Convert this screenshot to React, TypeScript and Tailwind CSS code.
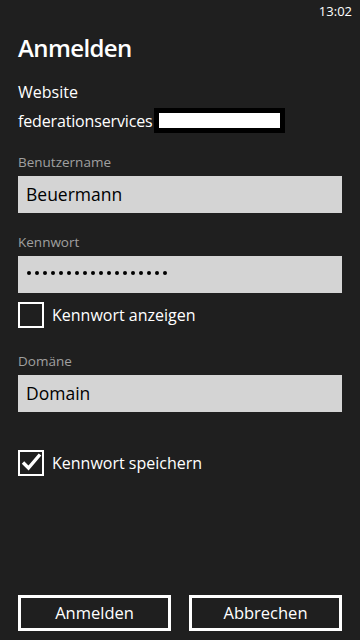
function Field({ label, children, mtLabel }: { label: string; children: React.ReactNode; mtLabel: string }) {
  return (
    <div className={mtLabel}>
      <div className="text-[13.5px] leading-[18px] text-[#a0a0a0]">{label}</div>
      <div className="mt-[5px] h-[37px] bg-[#d4d4d4] flex items-center px-[8px] text-[17.5px] text-black">
        {children}
      </div>
    </div>
  );
}

function Check({ checked, label }: { checked: boolean; label: string }) {
  return (
    <div className="flex items-center gap-[8px]">
      <div className="relative w-[26px] h-[26px] border-2 border-white">
        {checked && (
          <svg className="absolute -left-[2px] -top-[2px]" width="26" height="26" viewBox="0 0 26 26">
            <polyline points="5,12.5 10.5,18 22,4.5" fill="none" stroke="white" strokeWidth="3.4" />
          </svg>
        )}
      </div>
      <span className="text-[16px]">{label}</span>
    </div>
  );
}

export default function App() {
  const dots = Array.from({ length: 18 });
  return (
    <div
      className="w-[360px] h-[640px] bg-[#1f1f1f] text-white flex flex-col"
      style={{ fontFamily: '"Open Sans", "Noto Sans", sans-serif' }}
    >
      <div className="h-[24px] flex justify-end items-center pr-[8px] text-[13px]">13:02</div>

      <div className="px-[18px] flex flex-col flex-1">
        <h1 className="mt-[8px] text-[24px] leading-[32px] font-semibold tracking-[-0.6px]">Anmelden</h1>

        <div className="mt-[18px] text-[16px] leading-[20px]">Website</div>
        <div className="mt-[6px] flex items-center text-[16px] leading-[24px] tracking-[-0.15px]">
          <span>federationservices</span>
          <span className="ml-[1px] w-[131px] h-[25px] bg-black flex items-center justify-center">
            <span className="w-[121px] h-[15px] bg-white" />
          </span>
        </div>

        <Field label="Benutzername" mtLabel="mt-[20px]">Beuermann</Field>
        <Field label="Kennwort" mtLabel="mt-[20px]">
          <div className="flex gap-[4px] pl-[1px] -mt-[3px]">
            {dots.map((_, i) => (
              <span key={i} className="w-[4px] h-[4px] rounded-full bg-black" />
            ))}
          </div>
        </Field>
        <div className="mt-[9px]">
          <Check checked={false} label="Kennwort anzeigen" />
        </div>
        <Field label="Domäne" mtLabel="mt-[24px]">Domain</Field>
        <div className="mt-[38px]">
          <Check checked={true} label="Kennwort speichern" />
        </div>

        <div className="mt-auto mb-[9px] flex gap-[18px]">
          <button className="flex-1 h-[36px] border-[3px] border-white text-[16.5px] text-white">Anmelden</button>
          <button className="flex-1 h-[36px] border-[3px] border-white text-[16.5px] text-white">Abbrechen</button>
        </div>
      </div>
    </div>
  );
}
